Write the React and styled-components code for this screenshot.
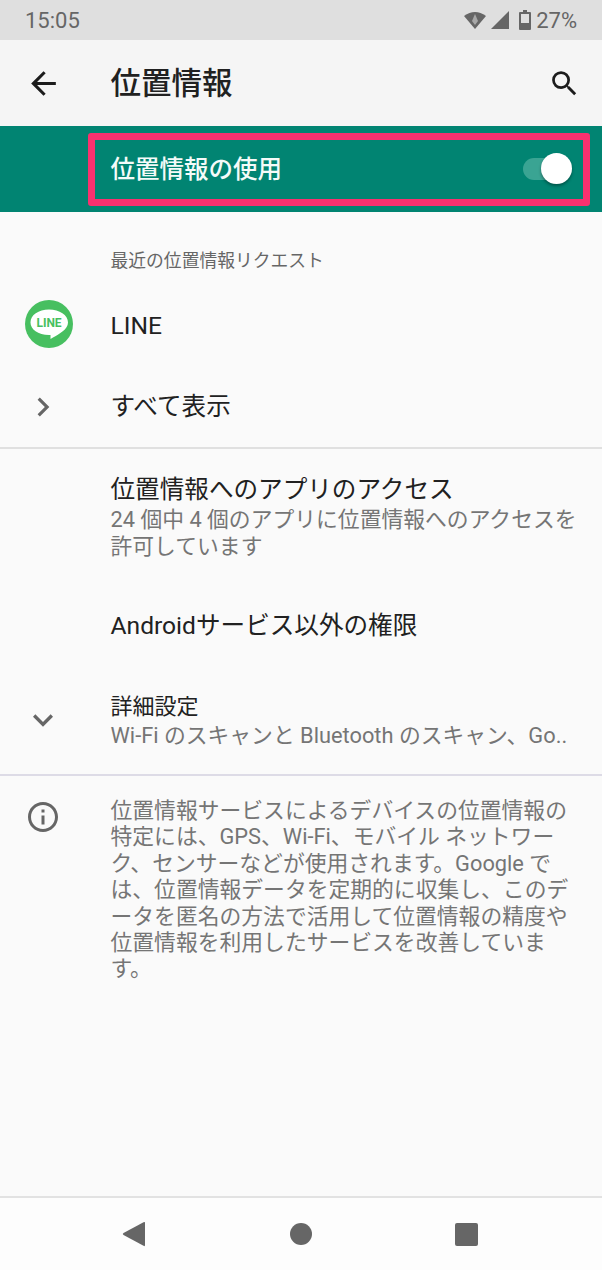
import React from 'react'
import styled, { createGlobalStyle } from 'styled-components'

const GlobalStyle = createGlobalStyle`
  html, body {
    margin: 0;
    padding: 0;
    background: #fafafa;
  }
  * {
    box-sizing: border-box;
  }
`

const LOCATION_NOTE = [
  '位置情報サービスによるデバイスの位置情報の',
  '特定には、GPS、Wi-Fi、モバイル ネットワー',
  'ク、センサーなどが使用されます。Google で',
  'は、位置情報データを定期的に収集し、このデ',
  'ータを匿名の方法で活用して位置情報の精度や',
  '位置情報を利用したサービスを改善していま',
  'す。',
]

const App = () => (
  <>
    <GlobalStyle />
    <Screen>
      <StatusBar>
        <span>15:05</span>
        <StatusIcons>
          <svg width="22" height="18" viewBox="0 0 22 18">
            <path d="M0 5 Q11 -3 22 5 L11 18 Z" fill="#666" />
            <path d="M11 3 L14 10 L11 14 L8 10 Z" fill="#a8a8a8" />
          </svg>
          <svg width="18" height="18" viewBox="0 0 18 18">
            <path d="M18 0 V18 H0 Z" fill="#666" />
          </svg>
          <BatteryIcon width="12" height="20" viewBox="0 0 12 20">
            <path d="M4 0 H8 V2 H11 Q12 2 12 3 V19 Q12 20 11 20 H1 Q0 20 0 19 V3 Q0 2 1 2 H4 Z" fill="#666" />
            <rect x="2" y="4" width="8" height="9" fill="#dfdfdf" />
          </BatteryIcon>
          <span>27%</span>
        </StatusIcons>
      </StatusBar>

      <Toolbar>
        <IconSlot>
          <svg width="37" height="37" viewBox="0 0 24 24" fill="#1c1c1c">
            <path d="M20 11H7.83l5.59-5.59L12 4l-8 8 8 8 1.41-1.41L7.83 13H20v-2z" />
          </svg>
        </IconSlot>
        <Title>位置情報</Title>
        <SearchSlot>
          <svg width="33" height="33" viewBox="0 0 24 24" fill="#1c1c1c">
            <path d="M15.5 14h-.79l-.28-.27A6.47 6.47 0 0 0 16 9.5 6.5 6.5 0 1 0 9.5 16c1.61 0 3.09-.59 4.23-1.57l.27.28v.79l5 4.99L20.49 19l-4.99-5zm-6 0C7.01 14 5 11.99 5 9.5S7.01 5 9.5 5 14 7.01 14 9.5 11.99 14 9.5 14z" />
          </svg>
        </SearchSlot>
      </Toolbar>

      <SwitchBar>
        <Highlight>
          <SwitchLabel>位置情報の使用</SwitchLabel>
          <SwitchTrack>
            <SwitchThumb />
          </SwitchTrack>
        </Highlight>
      </SwitchBar>

      <Content>
        <SectionHeader>最近の位置情報リクエスト</SectionHeader>

        <Row $height={80}>
          <LogoSlot>
            <svg width="48" height="48" viewBox="0 0 48 48">
              <circle cx="24" cy="24" r="24" fill="#47bf60" />
              <path d="M24 9.500 C34.500 9.500 43 15 43 22.500 C43 29.500 34 34 28 37.500 L25.500 39 V35 C13.500 35.500 5.500 29.500 5.500 22.500 C5.500 15 13.500 9.500 24 9.500 Z" fill="#fff" />
              <LogoText x="24" y="27" textAnchor="middle">LINE</LogoText>
            </svg>
          </LogoSlot>
          <RowTitle>LINE</RowTitle>
        </Row>

        <Row $height={81}>
          <IconSlot>
            <svg width="38" height="38" viewBox="0 0 24 24" fill="#666">
              <path d="M8.59 16.59 13.17 12 8.59 7.41 10 6l6 6-6 6z" />
            </svg>
          </IconSlot>
          <RowTitle>すべて表示</RowTitle>
        </Row>

        <Divider />

        <TextRow>
          <RowTitle>位置情報へのアプリのアクセス</RowTitle>
          <RowSummary>24 個中 4 個のアプリに位置情報へのアクセスを</RowSummary>
          <RowSummary>許可しています</RowSummary>
        </TextRow>

        <Row $height={80}>
          <IconSlot />
          <RowTitle>Androidサービス以外の権限</RowTitle>
        </Row>

        <AdvancedRow>
          <IconSlot>
            <svg width="40" height="40" viewBox="0 0 24 24" fill="#666">
              <path d="M7.41 8.59 12 13.17l4.59-4.58L18 10l-6 6-6-6z" />
            </svg>
          </IconSlot>
          <div>
            <SmallTitle>詳細設定</SmallTitle>
            <RowSummary>Wi-Fi のスキャンと Bluetooth のスキャン、Go..</RowSummary>
          </div>
        </AdvancedRow>

        <Divider $color="#dddbe6" />

        <NoteRow>
          <NoteIcon>
            <svg width="36" height="36" viewBox="0 0 24 24" fill="#666">
              <path d="M11 7h2v2h-2zm0 4h2v6h-2zm1-9C6.48 2 2 6.48 2 12s4.48 10 10 10 10-4.48 10-10S17.52 2 12 2zm0 18c-4.41 0-8-3.59-8-8s3.59-8 8-8 8 3.59 8 8-3.59 8-8 8z" />
            </svg>
          </NoteIcon>
          <NoteText>
            {LOCATION_NOTE.map((line) => (
              <div key={line}>{line}</div>
            ))}
          </NoteText>
        </NoteRow>
      </Content>

      <NavBar>
        <svg width="24" height="26" viewBox="0 0 24 26">
          <path d="M22 1 Q23 0.5 23 2 V24 Q23 25.500 22 25 L1.500 14 Q0 13 1.500 12 Z" fill="#666" />
        </svg>
        <HomeDot />
        <RecentSquare />
      </NavBar>
    </Screen>
  </>
)

const FONT = `Roboto, "Noto Sans CJK JP", sans-serif`

const Screen = styled.div`
  width: 602px;
  height: 1270px;
  display: flex;
  flex-direction: column;
  overflow: hidden;
  background: #fafafa;
  font-family: ${FONT};
`

const StatusBar = styled.div`
  height: 40px;
  flex: none;
  display: flex;
  align-items: center;
  justify-content: space-between;
  padding: 0 25px;
  background: #dfdfdf;
  color: #666;
  font-size: 22px;
`

const StatusIcons = styled.div`
  display: flex;
  align-items: center;
  gap: 5px;
`

const BatteryIcon = styled.svg`
  margin-left: 5px;
`

const Toolbar = styled.div`
  height: 86px;
  flex: none;
  display: flex;
  align-items: center;
  background: #f5f5f5;
`

const IconSlot = styled.div`
  width: 86px;
  margin-right: 24.500px;
  flex: none;
  display: flex;
  align-items: center;
  justify-content: center;
`

const LogoSlot = styled(IconSlot)`
  padding-left: 12px;
  margin-bottom: 4px;
`

const Title = styled.h1`
  flex: 1;
  margin: 0 0 4px;
  color: #212121;
  font-size: 30.500px;
  font-weight: 500;
`

const SearchSlot = styled.div`
  display: flex;
  margin-right: 21px;
`

const SwitchBar = styled.div`
  height: 86px;
  flex: none;
  display: flex;
  align-items: center;
  padding-left: 88px;
  padding-right: 12px;
  background: #018472;
`

const Highlight = styled.div`
  flex: 1;
  height: 73px;
  display: flex;
  align-items: center;
  justify-content: space-between;
  padding: 0 18px 0 15.500px;
  border: 7px solid #f8316f;
  border-radius: 3px;
`

const SwitchLabel = styled.span`
  color: #f4fbf9;
  font-size: 24.500px;
  font-weight: 500;
  margin-bottom: 3px;
`

const SwitchTrack = styled.div`
  position: relative;
  width: 42px;
  height: 22px;
  border-radius: 11px;
  background: #3aa493;
`

const SwitchThumb = styled.div`
  position: absolute;
  top: -5px;
  right: -7px;
  width: 31px;
  height: 31px;
  border-radius: 50%;
  background: #fff;
  box-shadow: 0 2px 3px rgba(0, 0, 0, 0.35);
`

const Content = styled.main`
  flex: 1;
  min-height: 0;
`

const SectionHeader = styled.div`
  padding: 37px 0 0 110.500px;
  height: 74px;
  color: #666;
  font-size: 17.800px;
  line-height: 24px;
`

const Row = styled.div`
  height: ${(props) => props.$height}px;
  display: flex;
  align-items: center;
`

const LogoText = styled.text`
  fill: #47bf60;
  font-family: ${FONT};
  font-size: 12px;
  font-weight: 700;
`

const RowTitle = styled.div`
  color: #212121;
  font-size: 24.600px;
  line-height: 32px;
`

const SmallTitle = styled.div`
  color: #212121;
  font-size: 22px;
  line-height: 31px;
`

const RowSummary = styled.div`
  color: #757575;
  font-size: 21.800px;
  line-height: 27px;
  white-space: nowrap;
`

const Divider = styled.div`
  height: 2px;
  background: ${(props) => props.$color || '#e0e0e0'};
`

const TextRow = styled.div`
  height: 137px;
  padding: 25px 0 0 110.500px;
`

const AdvancedRow = styled.div`
  height: 108px;
  display: flex;
  align-items: center;
`

const NoteRow = styled.div`
  display: flex;
  padding-top: 22px;
`

const NoteIcon = styled(IconSlot)`
  align-items: flex-start;
  padding-top: 1px;
`

const NoteText = styled.div`
  color: #757575;
  font-size: 21.800px;
  line-height: 26.400px;
  white-space: nowrap;
`

const NavBar = styled.nav`
  height: 74px;
  flex: none;
  display: flex;
  align-items: center;
  border-top: 2px solid #e2e2e2;
  background: #fdfdfd;
  padding-left: 122px;
  gap: 0;

  svg {
    margin-right: 144px;
  }
`

const HomeDot = styled.div`
  width: 22px;
  height: 22px;
  border-radius: 50%;
  background: #666;
  margin-right: 143px;
`

const RecentSquare = styled.div`
  width: 23px;
  height: 23px;
  border-radius: 2px;
  background: #666;
`

export default App
